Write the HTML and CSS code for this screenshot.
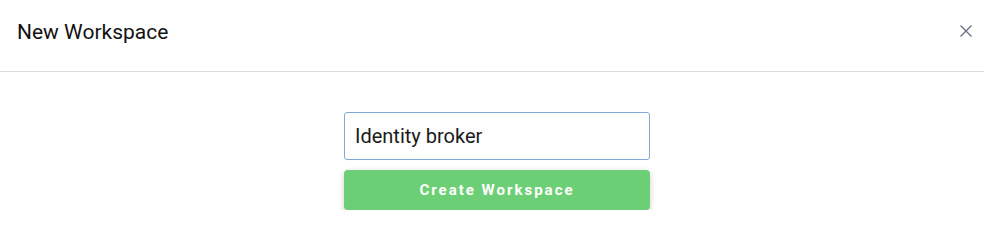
FILE: index.html
```html
<!DOCTYPE html>
<html lang="en">
<head>
<meta charset="utf-8">
<title>New Workspace</title>
<link rel="stylesheet" href="styles.css">
</head>
<body>
<div class="modal">
  <header class="modal-header">
    <h1 class="modal-title">New Workspace</h1>
    <button class="close-btn" aria-label="Close">
      <svg width="12" height="12" viewBox="0 0 12 12"><path d="M0.5 0.5 L11.5 11.5 M11.5 0.5 L0.5 11.5" stroke="#5f6a82" stroke-width="1.2" fill="none"/></svg>
    </button>
  </header>
  <main class="modal-body">
    <form class="ws-form">
      <input class="ws-input" type="text" value="Identity broker">
      <button class="ws-submit" type="button">Create Workspace</button>
    </form>
  </main>
</div>
</body>
</html>
```

FILE: styles.css
```css
html, body {
  margin: 0;
  padding: 0;
  background: #ffffff;
  font-family: Roboto, "Liberation Sans", sans-serif;
}

.modal-header {
  height: 71px;
  border-bottom: 1px solid #dcdcdc;
  display: flex;
  align-items: center;
  justify-content: space-between;
  padding: 0 12px 0 17px;
}

.modal-title {
  margin: 0;
  font-size: 21px;
  font-weight: 400;
  color: #111111;
  padding-bottom: 8px;
}

.close-btn {
  background: none;
  border: 0;
  padding: 0;
  width: 12px;
  height: 12px;
  display: flex;
  margin-bottom: 10px;
}

.modal-body {
  display: flex;
  justify-content: center;
  padding: 40px 0 0 10px;
}

.ws-form {
  width: 306px;
  display: flex;
  flex-direction: column;
  gap: 10px;
}

.ws-input {
  box-sizing: border-box;
  height: 48px;
  width: 100%;
  border: 1px solid #7eaad6;
  border-radius: 3px;
  padding: 0 10px;
  font-family: Roboto, "Liberation Sans", sans-serif;
  font-size: 20px;
  color: #1a1a1a;
  outline: none;
}

.ws-submit {
  height: 40px;
  width: 100%;
  border: 0;
  border-radius: 4px;
  background: #6dcf75;
  color: #ffffff;
  font-family: Roboto, "Liberation Sans", sans-serif;
  font-weight: 700;
  font-size: 15px;
  letter-spacing: 2px;
  box-shadow: 0 2px 6px rgba(0, 0, 0, 0.2);
}
```
